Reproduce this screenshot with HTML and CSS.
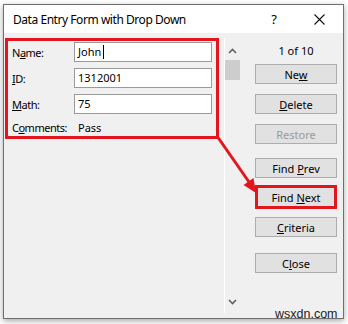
FILE: index.html
```html
<!DOCTYPE html>
<html lang="en">
<head>
    <meta charset="UTF-8">
    <title>Data Entry Form with Drop Down</title>
    <link rel="stylesheet" href="styles.css">
</head>
<body>
    <div class="window">
        <div class="titlebar">
            <span class="title">Data Entry Form with Drop Down</span>
            <span class="help">?</span>
            <svg class="close-x" width="11" height="11" viewBox="0 0 11 11">
                <path d="M0.5 0.5 L10.5 10.5 M10.5 0.5 L0.5 10.5" stroke="#111" stroke-width="1.1" fill="none"/>
            </svg>
        </div>
        <div class="content">
            <!-- record fields (highlighted in red) -->
            <div class="fields">
                <div class="row">
                    <label>N<u>a</u>me:</label>
                    <div class="input">John<span class="caret"></span></div>
                </div>
                <div class="row">
                    <label><u>I</u>D:</label>
                    <div class="input">1312001</div>
                </div>
                <div class="row">
                    <label><u>M</u>ath:</label>
                    <div class="input">75</div>
                </div>
                <div class="row comment">
                    <label>C<u>o</u>mments:</label>
                    <span class="value">Pass</span>
                </div>
            </div>

            <div class="scroll">
                <div class="arrow up">
                    <svg width="9" height="6" viewBox="0 0 9 6"><path d="M1 5 L4.5 1.5 L8 5" stroke="#606060" stroke-width="1.6" fill="none"/></svg>
                </div>
                <div class="thumb"></div>
                <div class="track"></div>
                <div class="arrow down">
                    <svg width="9" height="6" viewBox="0 0 9 6"><path d="M1 1 L4.5 4.5 L8 1" stroke="#606060" stroke-width="1.6" fill="none"/></svg>
                </div>
            </div>

            <div class="panel">
                <div class="counter">1 of 10</div>
                <button class="btn">Ne<u>w</u></button>
                <button class="btn gap"><u>D</u>elete</button>
                <button class="btn gap disabled">Restore</button>
                <button class="btn gap-lg">Find <u>P</u>rev</button>
                <button class="btn marked">Find <u>N</u>ext</button>
                <button class="btn after-mark"><u>C</u>riteria</button>
                <button class="btn gap-close">C<u>l</u>ose</button>
            </div>
        </div>
    </div>

    <svg class="pointer" width="348" height="324" viewBox="0 0 348 324">
        <line x1="217" y1="136" x2="249" y2="182" stroke="#e3161d" stroke-width="3"/>
        <polygon points="256,193 243.5,185 253.5,178" fill="#e3161d"/>
    </svg>

    <div class="watermark">wsxdn.com</div>
</body>
</html>
```

FILE: styles.css
```css
body {
    margin: 0;
    background: #ffffff;
    font-family: "Noto Sans", "Open Sans", sans-serif;
    font-size: 11px;
    color: #000;
    position: relative;
    width: 348px;
    height: 324px;
    overflow: hidden;
}

.window {
    margin: 4px 0 0 3px;
    width: 341px;
    height: 315px;
    box-sizing: border-box;
    border: 1px solid #6f6f6f;
    background: #f0f0f0;
    box-shadow: 0 2px 6px rgba(0, 0, 0, 0.35);
}

.titlebar {
    height: 28px;
    background: #ffffff;
    display: flex;
    align-items: center;
    padding-left: 9px;
}

.title {
    font-size: 12px;
    letter-spacing: -0.45px;
    flex: 1;
}

.help {
    font-size: 13px;
    margin-right: 37px;
}

.close-x {
    margin-right: 18px;
}

.content {
    display: flex;
    padding-top: 5px;
    height: 280px;
}

/* left: the record fields */
.fields {
    margin-left: 1px;
    width: 214px;
    height: 101px;
    box-sizing: border-box;
    border: 3px solid #e3161d;
    padding: 1px 4px 0 4px;
}

.row {
    display: flex;
    align-items: center;
    height: 20px;
    margin-bottom: 6px;
}

.row label {
    width: 62px;
    flex: none;
    letter-spacing: -0.5px;
}

.input {
    width: 138px;
    height: 20px;
    box-sizing: border-box;
    background: #fff;
    border: 1px solid #9a9a9a;
    padding-left: 3px;
    line-height: 18px;
    display: flex;
    align-items: center;
}

.caret {
    display: inline-block;
    width: 1px;
    height: 14px;
    background: #000;
    margin-left: 2px;
}

.row.comment {
    height: 15px;
    margin-bottom: 0;
}

.row.comment .value {
    padding-left: 4px;
}

/* middle: scrollbar */
.scroll {
    margin-left: 5px;
    width: 16px;
    height: 275px;
    box-sizing: border-box;
    border-left: 1px solid #ffffff;
    display: flex;
    flex-direction: column;
}

.arrow {
    height: 22px;
    display: flex;
    justify-content: center;
}

.arrow.up {
    align-items: flex-end;
    padding-bottom: 6px;
    box-sizing: border-box;
}

.arrow.down {
    align-items: center;
}

.thumb {
    height: 20px;
    background: #cdcdcd;
}

.track {
    flex: 1;
}

/* right: buttons */
.panel {
    margin-left: 15px;
    width: 82px;
    display: flex;
    flex-direction: column;
}

.counter {
    height: 26px;
    line-height: 26px;
    text-align: center;
}

.btn {
    width: 82px;
    height: 20px;
    padding: 0;
    background: #e1e1e1;
    border: 1px solid #adadad;
    font-family: "Noto Sans", "Open Sans", sans-serif;
    font-size: 11px;
    color: #000;
}

.btn.gap {
    margin-top: 10px;
}

.btn.gap-lg {
    margin-top: 14px;
}

.btn.disabled {
    color: #9a9a9a;
}

.btn.marked {
    margin-top: 7px;
    height: 24px;
    border: 3px solid #e3161d;
}

.btn.after-mark {
    margin-top: 8px;
}

.btn.gap-close {
    margin-top: 16px;
}

.pointer {
    position: absolute;
    left: 0;
    top: 0;
    pointer-events: none;
}

.watermark {
    position: absolute;
    left: 275px;
    top: 307px;
    font-family: "Liberation Sans", Arial, sans-serif;
    font-size: 12.5px;
    color: #222;
}
```
